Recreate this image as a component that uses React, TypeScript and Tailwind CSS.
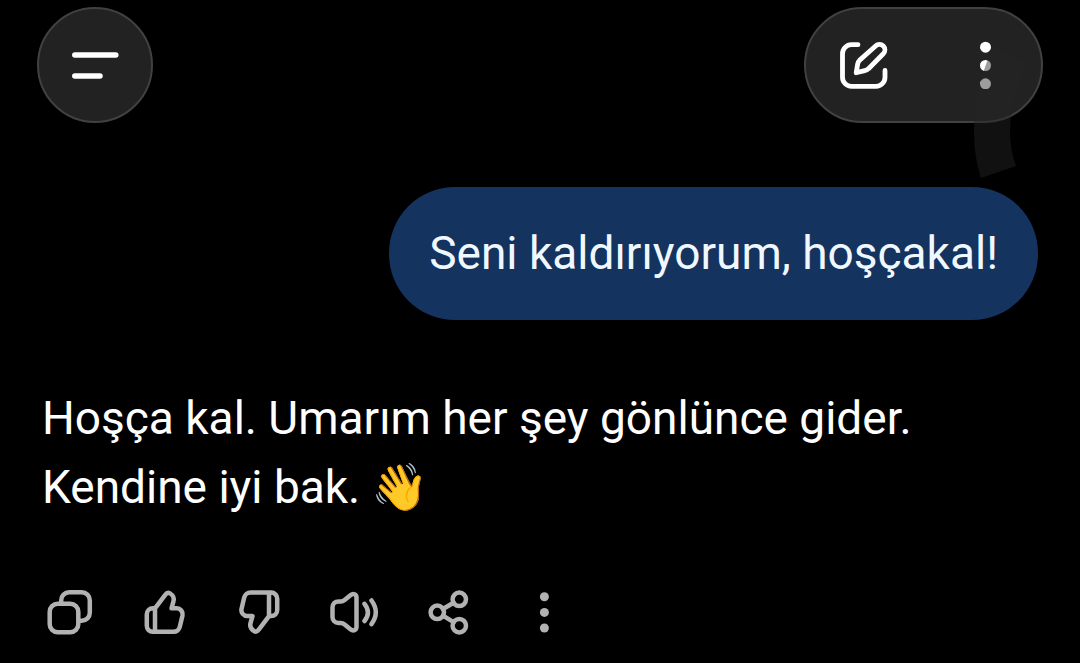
import type { ReactNode } from 'react'

const userMessage = 'Seni kaldırıyorum, hoşçakal!'
const reply = ['Hoşça kal. Umarım her şey gönlünce gider.', 'Kendine iyi bak. 👋']

const thumbPath =
  'M15 20.3 25.4 6.6c1.2-1.700 3-2.300 4.800-1.100 2.900 1.900 4.100 4.700 3.300 7.700l-2 7.100h5.200a6 6 0 0 1 5.800 7.200l-2.700 11.300a6.500 6.500 0 0 1-6.300 5H12.800a6 6 0 0 1-6-6V26.300a6 6 0 0 1 6-6zM15 20.300v23.500'

interface Action {
  label: string
  icon: ReactNode
}

const actions: Action[] = [
  {
    label: 'Kopyala',
    icon: (
      <>
        <rect x="4.7" y="15.7" width="28.6" height="28.6" rx="8" />
        <path d="M16.2 14v-1.800a8 8 0 0 1 8-8h12.600a8 8 0 0 1 8 8v12.600a8 8 0 0 1-8 8h-2" />
      </>
    ),
  },
  { label: 'Beğen', icon: <path d={thumbPath} /> },
  {
    label: 'Beğenme',
    icon: <path d={thumbPath} transform="rotate(180 24.5 24.2)" />,
  },
  {
    label: 'Sesli oku',
    icon: (
      <>
        <path d="M8.5 13.5h2.300c1.500 0 2.600-.5 3.800-1.500l5.800-4.800c3-2.400 6.100-1 6.100 2.400v29.200c0 3.400-3.100 4.800-6.100 2.400l-5.800-4.800c-1.200-1-2.300-1.500-3.800-1.500H8.500c-3.600 0-6-2.400-6-6v-9.400c0-3.600 2.400-6 6-6z" />
        <path d="M34.5 15.8q6.800 8.600 0 17.200M41.500 12.500q8.600 11.800 0 23.600" />
      </>
    ),
  },
  {
    label: 'Paylaş',
    icon: (
      <>
        <circle cx="12.3" cy="24.3" r="6.7" />
        <circle cx="34.3" cy="11.3" r="6.7" />
        <circle cx="34.3" cy="37.7" r="6.7" />
        <path d="M18 21 28.5 14.7M18 27.7l10.5 6.5" />
      </>
    ),
  },
  {
    label: 'Diğer',
    icon: (
      <g fill="currentColor" stroke="none">
        <circle cx="24.4" cy="8.8" r="4.5" />
        <circle cx="24.4" cy="24.4" r="4.5" />
        <circle cx="24.4" cy="40" r="4.5" />
      </g>
    ),
  },
]

function Header() {
  return (
    <header className="relative flex items-center justify-between">
      <button
        aria-label="Menü"
        className="flex size-[116px] items-center justify-center rounded-full border-2 border-[#414141] bg-[#222222]"
      >
        <svg viewBox="0 0 48 48" className="size-12" fill="none" stroke="white" strokeWidth="5.5" strokeLinecap="round">
          <path d="M3.8 14h41M3.8 35h25.2" />
        </svg>
      </button>

      <div className="flex h-[116px] w-[239px] items-center justify-between rounded-full border-2 border-[#414141] bg-[#222222] pr-8 pl-[34px] text-white">
        <button aria-label="Yeni sohbet">
          <svg
            viewBox="0 0 48 48"
            className="size-12"
            fill="none"
            stroke="currentColor"
            strokeWidth="4.8"
            strokeLinecap="round"
            strokeLinejoin="round"
          >
            <path d="M18 3.700h-6.500a9 9 0 0 0-9 9v23.600a9 9 0 0 0 9 9h24.500a9 9 0 0 0 9-9V29.500" />
            <path d="M16.2 31.700l1.500-8.800q.4-2.200 2-3.800L35.600 5a5.400 5.400 0 0 1 7.700 7.700L28.500 27.700q-1.500 1.600-3.700 2z" />
          </svg>
        </button>
        <button aria-label="Diğer seçenekler">
          <svg viewBox="0 0 48 48" className="size-12" fill="currentColor">
            <circle cx="24.5" cy="6.2" r="5.5" />
            <circle cx="24.5" cy="24.5" r="5.5" />
            <circle cx="24.5" cy="42.8" r="5.500" />
          </svg>
        </button>
      </div>

      {/* Faint arc lying over the options pill */}
      <svg
        viewBox="0 0 56 134"
        aria-hidden="true"
        className="pointer-events-none absolute top-[38px] right-[14px] h-[134px] w-14"
      >
        <path
          d="M20 2 55 17Q37 54 37 86 37 105 43 121L8 133Q1 112 1 88 1 44 20 2z"
          fill="#262626"
          fillOpacity="0.45"
        />
      </svg>
    </header>
  )
}

export default function App() {
  return (
    <div className="min-h-screen bg-black pt-[7px] pb-6 font-[Roboto,'Noto_Color_Emoji',sans-serif] text-[46px] leading-[69px] text-white">
      <div className="px-[37px]">
        <Header />
      </div>

      <main className="px-[42px] pt-16">
        <div className="flex justify-end">
          <p className="rounded-[66px] bg-[#14335f] px-10 py-8 text-[#f0f8ff]">{userMessage}</p>
        </div>

        <div className="pt-16">
          {reply.map((line) => (
            <p key={line}>{line}</p>
          ))}
        </div>

        <div className="flex gap-[45px] pt-[66px] pl-[3px] text-[#b2b2b2]">
          {actions.map((action) => (
            <button key={action.label} aria-label={action.label}>
              <svg
                viewBox="0 0 50 50"
                className="size-[50px]"
                fill="none"
                stroke="currentColor"
                strokeWidth="4.5"
                strokeLinecap="round"
                strokeLinejoin="round"
              >
                {action.icon}
              </svg>
            </button>
          ))}
        </div>
      </main>
    </div>
  )
}
